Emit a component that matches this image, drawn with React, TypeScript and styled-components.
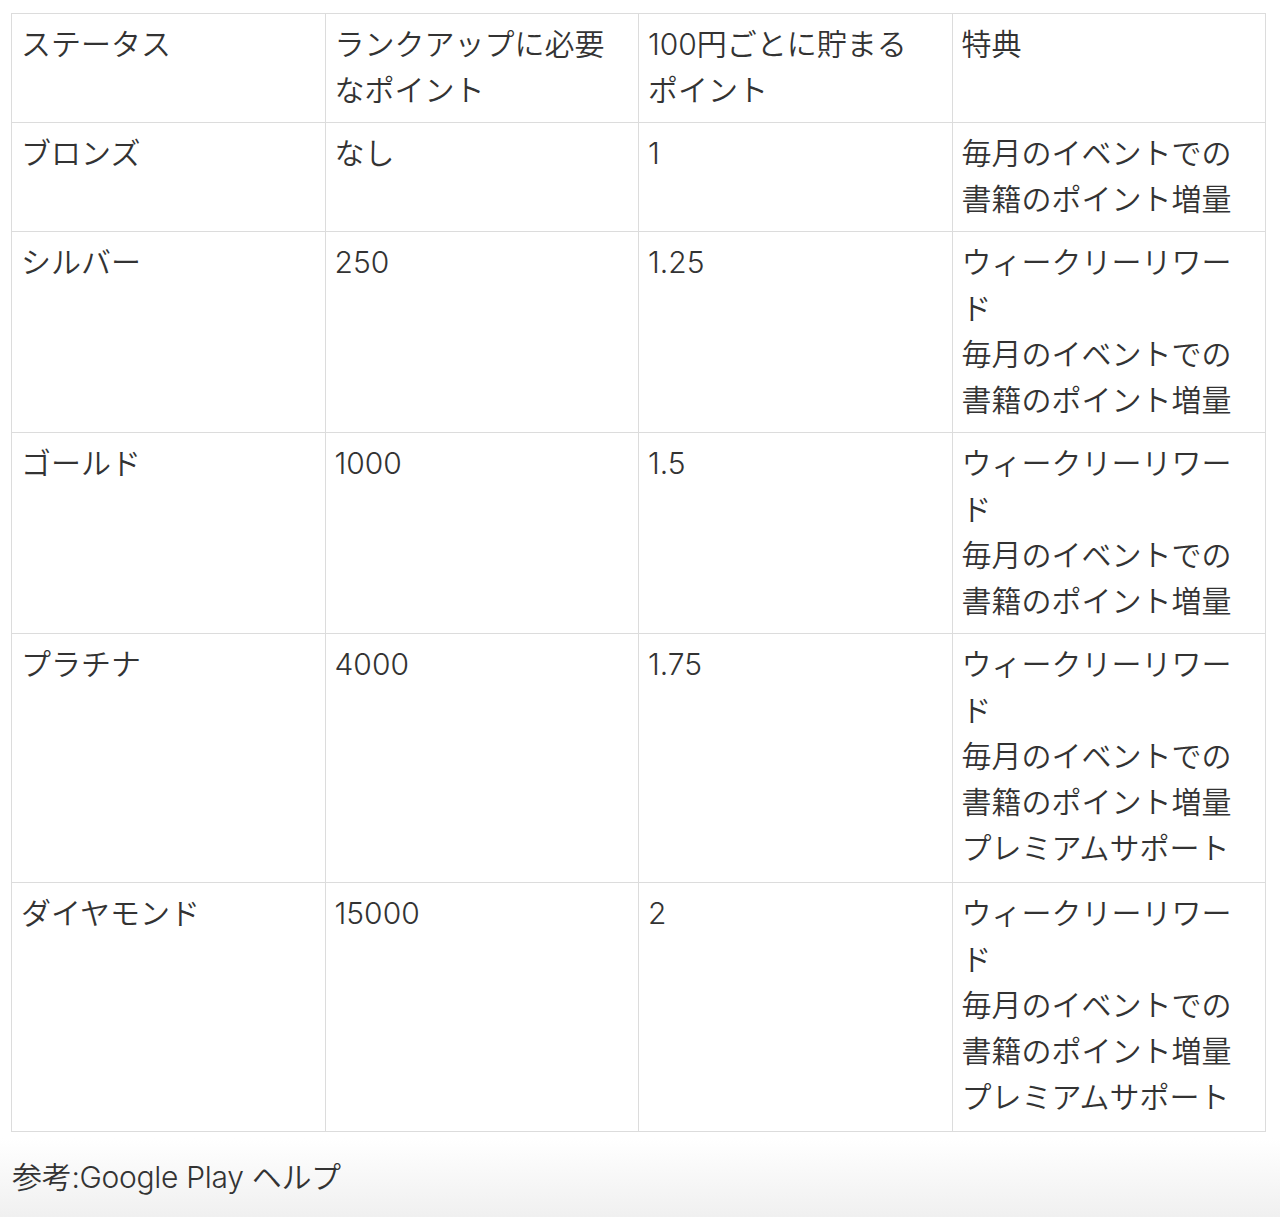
import React from "react";
import styled, { createGlobalStyle } from "styled-components";

const Global = createGlobalStyle`
  html, body { margin: 0; padding: 0; background: #fff; }
  body { font-family: "Inter", "Noto Sans CJK JP", "Noto Sans", sans-serif; color: #333; }
`;

const Page = styled.div`
  min-height: 1217px;
  box-sizing: border-box;
  padding: 13px 14px 0 11px;
  background: linear-gradient(to bottom, #ffffff 0px, #ffffff 1138px, #f0f0f0 1217px);
`;

const Table = styled.table`
  width: 1255px;
  border-collapse: collapse;
  table-layout: fixed;
  font-size: 30px;
  line-height: 46px;
`;

const Cell = styled.td<{ $tall?: boolean }>`
  border: 1px solid #dcdcdc;
  padding: 7px 10px ${(p) => (p.$tall ? 11 : 9)}px 9px;
  vertical-align: top;
  text-align: left;
  font-weight: 350;
  color: #333333;
  letter-spacing: 0;
`;

const HeadCell = styled(Cell).attrs({ as: "th" })``;

const NoWrap = styled.span`
  white-space: nowrap;
`;

const Note = styled.p`
  margin: 22px 0 0 1px;
  font-size: 30px;
  line-height: 46px;
  font-weight: 350;
  color: #333333;
  letter-spacing: -0.3px;
`;

type Row = { status: string; need: string; rate: string; perks: string[] };

const rows: Row[] = [
  { status: "ブロンズ", need: "なし", rate: "1", perks: ["毎月のイベントでの書籍のポイント増量"] },
  { status: "シルバー", need: "250", rate: "1.25", perks: ["ウィークリーリワード", "毎月のイベントでの書籍のポイント増量"] },
  { status: "ゴールド", need: "1000", rate: "1.5", perks: ["ウィークリーリワード", "毎月のイベントでの書籍のポイント増量"] },
  { status: "プラチナ", need: "4000", rate: "1.75", perks: ["ウィークリーリワード", "毎月のイベントでの書籍のポイント増量", "プレミアムサポート"] },
  { status: "ダイヤモンド", need: "15000", rate: "2", perks: ["ウィークリーリワード", "毎月のイベントでの書籍のポイント増量", "プレミアムサポート"] },
];

export default function App() {
  return (
    <>
      <Global />
      <Page>
        <Table>
          <thead>
            <tr>
              <HeadCell>ステータス</HeadCell>
              <HeadCell>ランクアップに必要なポイント</HeadCell>
              <HeadCell>
                100円ごとに貯まる<NoWrap>ポイント</NoWrap>
              </HeadCell>
              <HeadCell>特典</HeadCell>
            </tr>
          </thead>
          <tbody>
            {rows.map((r) => {
              const tall = r.perks.length > 2;
              return (
                <tr key={r.status}>
                  <Cell $tall={tall}>{r.status}</Cell>
                  <Cell $tall={tall}>{r.need}</Cell>
                  <Cell $tall={tall}>{r.rate}</Cell>
                  <Cell $tall={tall}>
                    {r.perks.map((p, i) => (
                      <React.Fragment key={p}>
                        {i > 0 && <br />}
                        {p}
                      </React.Fragment>
                    ))}
                  </Cell>
                </tr>
              );
            })}
          </tbody>
        </Table>
        <Note>参考:Google Play ヘルプ</Note>
      </Page>
    </>
  );
}
